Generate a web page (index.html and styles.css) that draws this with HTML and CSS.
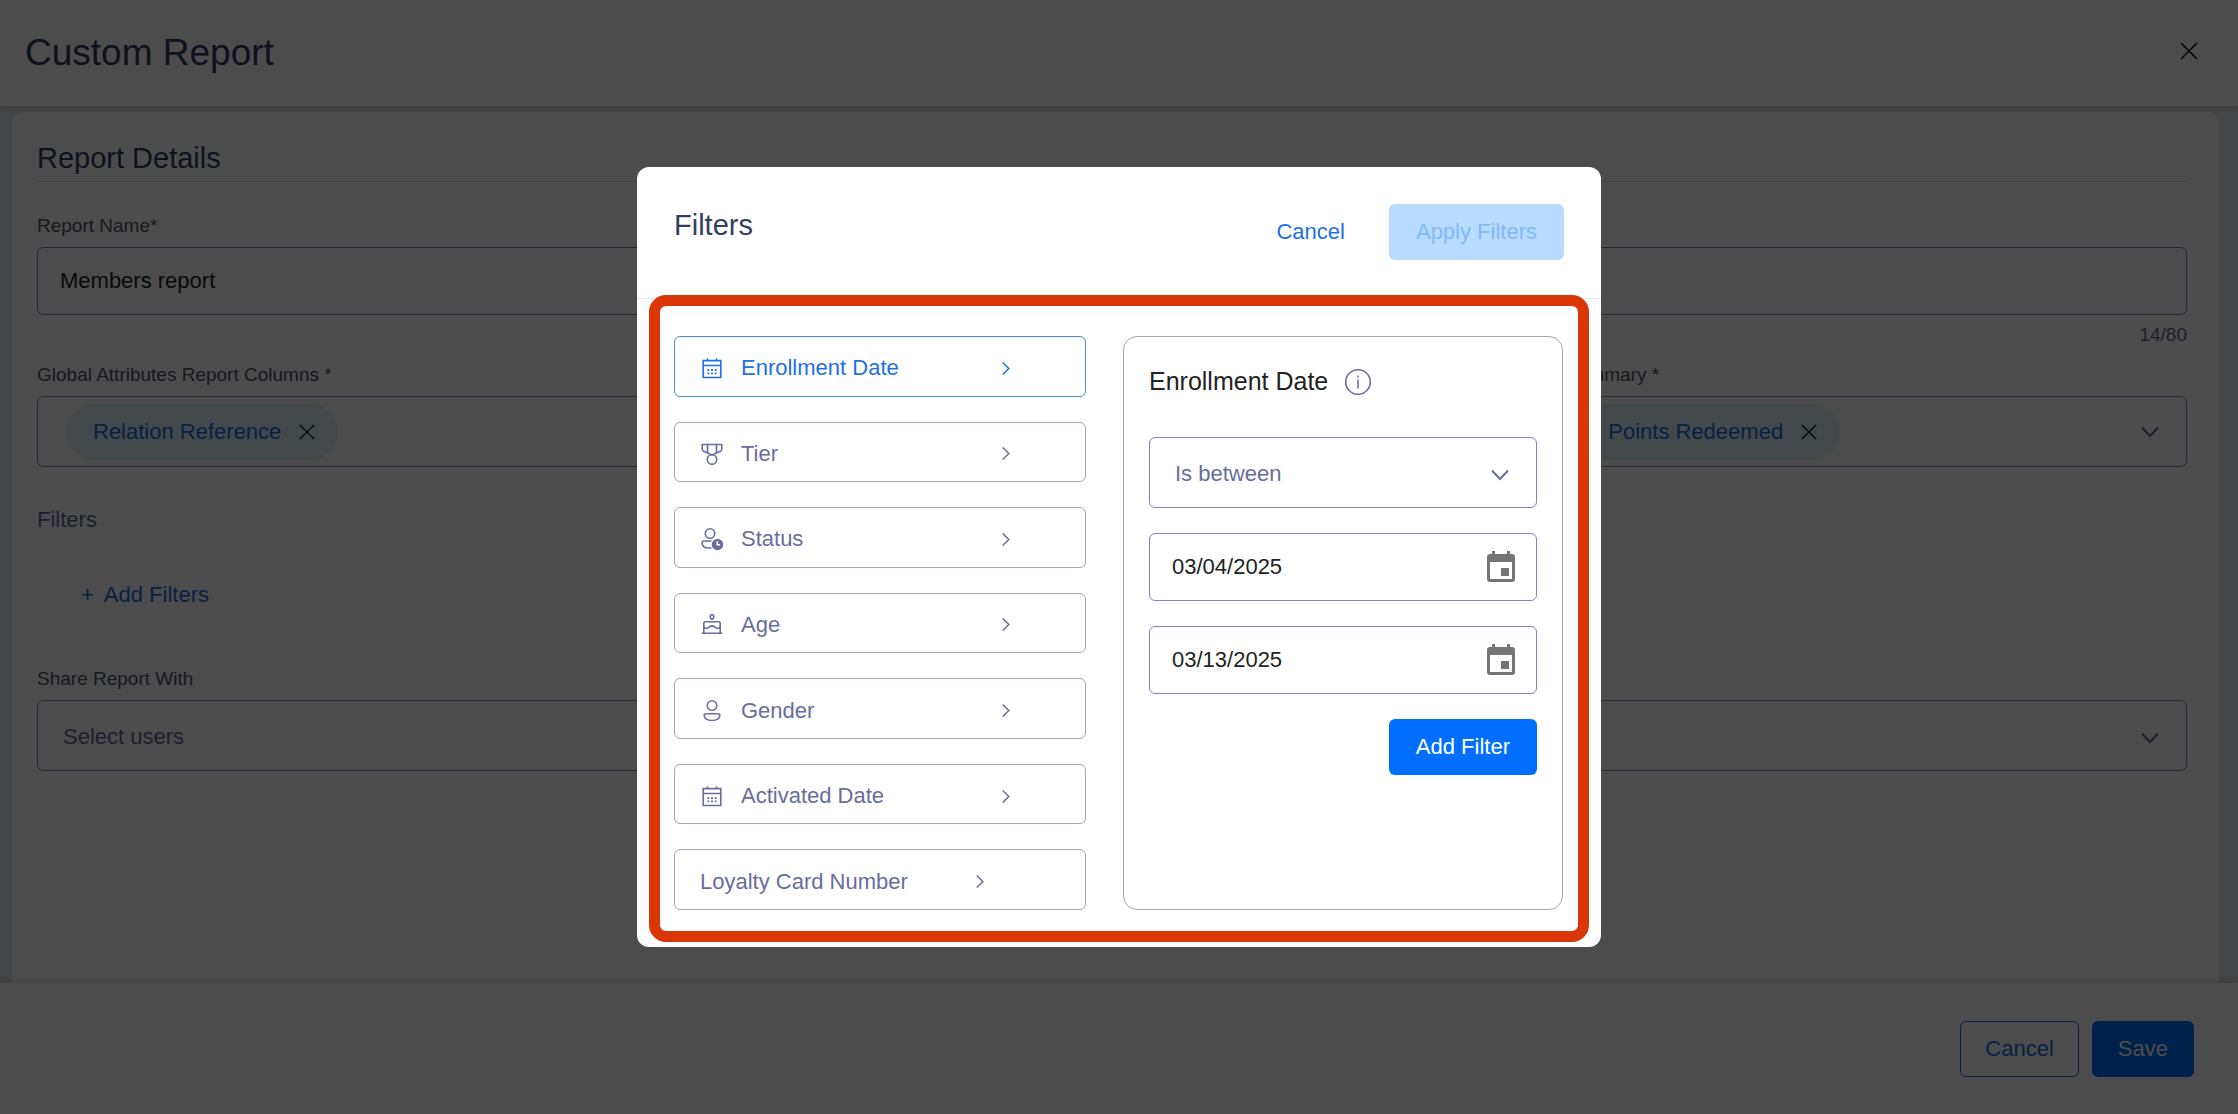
FILE: index.html
```html
<!DOCTYPE html>
<html lang="en">
<head>
  <meta charset="UTF-8">
  <meta name="viewport" content="width=device-width, initial-scale=1">
  <title>Custom Report</title>
  <link rel="stylesheet" href="styles.css">
</head>
<body>
  <!-- shared icons -->
  <svg class="sprite" aria-hidden="true">
    <symbol id="i-close" viewBox="0 0 18 18">
      <path d="M1 1L17 17M17 1L1 17"/>
    </symbol>
    <symbol id="i-down" viewBox="0 0 18 12">
      <path d="M1 1.5L9 10L17 1.5"/>
    </symbol>
    <symbol id="i-right" viewBox="0 0 10 16">
      <path d="M1.5 1.5L8 8L1.5 14.5"/>
    </symbol>
    <symbol id="i-calendar" viewBox="0 0 24 24">
      <path d="M3.2 4.600H20.800V21.500H3.200ZM3.200 9.500H20.800M7.500 2.500V5M16.500 2.500V5"/>
      <path class="dots" d="M7.400 14h1.800M11.100 14h1.800M14.800 14h1.800M7.400 17.300h1.800M11.100 17.300h1.800M14.800 17.300h1.800"/>
    </symbol>
    <symbol id="i-medal" viewBox="0 0 24 24">
      <path d="M2.200 2.500H21.800V7Q21.800 8.700 20.400 9.300L12 13L3.600 9.300Q2.200 8.700 2.200 7ZM7.500 2.500V11M16.500 2.500V11"/>
      <circle cx="12" cy="17.500" r="4.700"/>
    </symbol>
    <symbol id="i-user-clock" viewBox="0 0 24 24">
      <circle cx="10" cy="6.500" r="4.700"/>
      <path d="M11.500 14H4Q2.200 14 2.200 16Q2.200 21 9 21H11.500"/>
      <circle class="solid" cx="17.500" cy="17.500" r="5.700"/>
      <path class="hand" d="M17.300 14.500V17.800H20"/>
    </symbol>
    <symbol id="i-cake" viewBox="0 0 24 24">
      <ellipse cx="12" cy="3.800" rx="1.700" ry="2.300"/>
      <path d="M3.800 20V10.500Q3.800 8.700 5.500 8.700H18.500Q20.200 8.700 20.200 10.500V20M2 20.200H22M3.800 14Q6.500 16.500 9.200 14Q12 11.800 14.800 14Q17.500 16.500 20.200 14"/>
    </symbol>
    <symbol id="i-user" viewBox="0 0 24 24">
      <circle cx="12" cy="6.500" r="4.700"/>
      <path d="M6 14.800H18Q19.800 14.800 19.800 16.500Q19.300 21.500 12 21.500Q4.700 21.500 4.200 16.500Q4.200 14.800 6 14.800Z"/>
    </symbol>
    <symbol id="i-event" viewBox="0 0 28 32">
      <path d="M25 3H23V0H20V3H8V0H5V3H3Q0 3 0 6V28Q0 31 3 31H25Q28 31 28 28V6Q28 3 25 3ZM25 28H3V11H25ZM14 17H22V25H14Z"/>
    </symbol>
  </svg>

  <div class="page">
    <header class="page-header">
      <h1>Custom Report</h1>
      <button class="icon-btn" type="button" aria-label="Close">
        <svg class="icon icon-close"><use href="#i-close"/></svg>
      </button>
    </header>

    <main class="page-body">
      <form class="card">
        <h2>Report Details</h2>

        <div class="field">
          <label for="report_name">Report Name*</label>
          <input class="control" id="report_name" type="text" maxlength="80" value="Members report">
          <span class="counter">14/80</span>
        </div>

        <div class="columns">
          <div class="field">
            <label for="global_cols">Global Attributes Report Columns *</label>
            <div class="control multi">
              <span class="chip">Relation Reference
                <button class="icon-btn" type="button" aria-label="Remove Relation Reference"><svg class="icon icon-remove"><use href="#i-close"/></svg></button>
              </span>
              <button class="icon-btn" id="global_cols" type="button" aria-label="Open columns"><svg class="icon icon-down"><use href="#i-down"/></svg></button>
            </div>
          </div>
          <div class="field">
            <label for="summary_cols">Loyalty Summary *</label>
            <div class="control multi">
              <span class="chip">Total Points Redeemed
                <button class="icon-btn" type="button" aria-label="Remove Total Points Redeemed"><svg class="icon icon-remove"><use href="#i-close"/></svg></button>
              </span>
              <button class="icon-btn" id="summary_cols" type="button" aria-label="Open summary"><svg class="icon icon-down"><use href="#i-down"/></svg></button>
            </div>
          </div>
        </div>

        <div class="filters">
          <h3>Filters</h3>
          <button class="add-filters" type="button"><span>+</span>Add Filters</button>
        </div>

        <div class="field">
          <label for="share_with">Share Report With</label>
          <div class="select">
            <select class="control" id="share_with">
              <option>Select users</option>
            </select>
            <svg class="icon icon-down"><use href="#i-down"/></svg>
          </div>
        </div>
      </form>
    </main>

    <footer class="page-footer">
      <button class="btn btn-outline" type="button">Cancel</button>
      <button class="btn btn-primary" type="button">Save</button>
    </footer>
  </div>

  <div class="overlay">
    <section class="modal" role="dialog" aria-modal="true" aria-labelledby="modal_title">
      <header class="modal-header">
        <h2 id="modal_title">Filters</h2>
        <div class="modal-actions">
          <button class="btn btn-text" type="button">Cancel</button>
          <button class="btn btn-primary" type="button" disabled>Apply Filters</button>
        </div>
      </header>

      <div class="modal-body">
        <nav class="filter-list">
          <button class="filter-item active" type="button">
            <svg class="icon icon-type"><use href="#i-calendar"/></svg>
            <span>Enrollment Date</span>
            <svg class="icon icon-right"><use href="#i-right"/></svg>
          </button>
          <button class="filter-item" type="button">
            <svg class="icon icon-type"><use href="#i-medal"/></svg>
            <span>Tier</span>
            <svg class="icon icon-right"><use href="#i-right"/></svg>
          </button>
          <button class="filter-item" type="button">
            <svg class="icon icon-type"><use href="#i-user-clock"/></svg>
            <span>Status</span>
            <svg class="icon icon-right"><use href="#i-right"/></svg>
          </button>
          <button class="filter-item" type="button">
            <svg class="icon icon-type"><use href="#i-cake"/></svg>
            <span>Age</span>
            <svg class="icon icon-right"><use href="#i-right"/></svg>
          </button>
          <button class="filter-item" type="button">
            <svg class="icon icon-type"><use href="#i-user"/></svg>
            <span>Gender</span>
            <svg class="icon icon-right"><use href="#i-right"/></svg>
          </button>
          <button class="filter-item" type="button">
            <svg class="icon icon-type"><use href="#i-calendar"/></svg>
            <span>Activated Date</span>
            <svg class="icon icon-right"><use href="#i-right"/></svg>
          </button>
          <button class="filter-item no-icon" type="button">
            <span>Loyalty Card Number</span>
            <svg class="icon icon-right"><use href="#i-right"/></svg>
          </button>
        </nav>

        <div class="filter-panel">
          <h3>
            Enrollment Date
            <svg class="icon icon-info" viewBox="0 0 28 28">
              <circle cx="14" cy="15" r="12.300"/>
              <path d="M14 12.500V21.500M14 8.500V10.500"/>
            </svg>
          </h3>
          <div class="select">
            <select class="control" aria-label="Condition">
              <option>Is between</option>
            </select>
            <svg class="icon icon-down"><use href="#i-down"/></svg>
          </div>
          <div class="control date">
            <input type="text" aria-label="From date" value="03/04/2025">
            <button class="icon-btn" type="button" aria-label="Pick from date"><svg class="icon-event"><use href="#i-event"/></svg></button>
          </div>
          <div class="control date">
            <input type="text" aria-label="To date" value="03/13/2025">
            <button class="icon-btn" type="button" aria-label="Pick to date"><svg class="icon-event"><use href="#i-event"/></svg></button>
          </div>
          <button class="btn btn-primary" type="button">Add Filter</button>
        </div>
        <div class="highlight"></div>
      </div>
    </section>
  </div>
</body>
</html>
```

FILE: styles.css
```css
:root {
  --navy: #333e63;
  --muted: #6a6d9c;
  --border: #8085bd;
  --blue: #006fff;
  --link: #1f6fe5;
}

* {
  box-sizing: border-box;
}

body {
  margin: 0;
  font-family: "Liberation Sans", Arial, sans-serif;
  font-size: 22px;
  line-height: 26px;
  color: #222;
}

h1, h2, h3 {
  margin: 0;
  font-weight: 400;
}

button, input, select {
  font: inherit;
  color: inherit;
}

button {
  cursor: pointer;
}

.sprite {
  position: absolute;
  width: 0;
  height: 0;
}

.icon {
  flex: none;
  fill: none;
  stroke: currentColor;
  stroke-width: 1.6;
}

.icon-close {
  width: 18px;
  height: 18px;
  color: #111;
}

.icon-remove {
  width: 16px;
  height: 16px;
  color: #222;
}

.icon-down {
  width: 18px;
  height: 12px;
  color: var(--muted);
  stroke-width: 2;
}

.icon-right {
  width: 10px;
  height: 15px;
}

.icon-type {
  width: 24px;
  height: 24px;
}

.dots {
  stroke-width: 1.8;
}

.solid {
  fill: currentColor;
  stroke: none;
}

.hand {
  stroke: #fff;
}

.icon-btn {
  display: flex;
  padding: 0;
  border: 0;
  background: none;
}

/* Page */
.page {
  min-height: 100vh;
  display: flex;
  flex-direction: column;
  background: #e1e6ed;
}

.page-header {
  display: flex;
  align-items: center;
  justify-content: space-between;
  height: 106px;
  padding: 0 40px 4px 25px;
  background: #fff;
  box-shadow: 0 2px 6px rgba(0, 0, 0, .15);
}

h1 {
  padding-top: 4px;
  font-size: 37px;
  line-height: 44px;
  color: var(--navy);
}

.page-body {
  flex: 1;
  display: flex;
  padding: 6px 19px 0 12px;
}

.card {
  flex: 1;
  padding: 29px 32px 28px 25px;
  background: #fff;
  border-radius: 12px 12px 0 0;
}

.card > h2 {
  padding-bottom: 6px;
  border-bottom: 1px solid #dcdfe6;
  margin-bottom: 32px;
  font-size: 29px;
  line-height: 34px;
  color: var(--navy);
}

.field {
  display: flex;
  flex-direction: column;
}

.field label {
  margin-bottom: 9px;
  font-size: 19px;
  line-height: 24px;
  color: #55566a;
}

.control {
  width: 100%;
  height: 68px;
  padding: 0 22px;
  border: 1px solid var(--border);
  border-radius: 6px;
  background: #fff;
}

.counter {
  align-self: flex-end;
  margin-top: 8px;
  font-size: 19px;
  line-height: 24px;
  color: var(--muted);
}

.columns {
  display: grid;
  grid-template-columns: repeat(3, 1fr);
  gap: 44px;
  margin-top: 16px;
}

.columns .field:last-child {
  grid-column: 3;
}

.multi {
  display: flex;
  align-items: center;
  justify-content: space-between;
  height: 71px;
  padding: 0 27px 0 29px;
}

.chip {
  display: flex;
  align-items: center;
  gap: 18px;
  height: 56px;
  padding: 0 23px 0 26px;
  border-radius: 28px;
  background: #e0f2f8;
  color: var(--link);
}

.filters {
  margin: 40px 0 59px;
}

.filters h3 {
  font-size: 22px;
  line-height: 26px;
  color: var(--muted);
}

.add-filters {
  display: flex;
  gap: 10px;
  margin: 49px 0 0 44px;
  padding: 0;
  border: 0;
  background: none;
  color: var(--link);
}

.select {
  position: relative;
}

.select .control {
  height: 71px;
  padding: 2px 25px 0;
  appearance: none;
  color: var(--muted);
}

.select .icon-down {
  position: absolute;
  right: 28px;
  top: 32px;
  pointer-events: none;
}

.page-footer {
  display: flex;
  align-items: center;
  justify-content: flex-end;
  gap: 13px;
  height: 131px;
  padding: 0 44px;
  background: #fff;
  box-shadow: 0 -2px 6px rgba(0, 0, 0, .15);
}

.btn {
  height: 56px;
  padding: 0 25px;
  border: 1px solid transparent;
  border-radius: 6px;
  background: none;
}

.btn-primary {
  background: var(--blue);
  color: #fff;
}

.modal .btn-primary {
  padding: 0 26px;
}

.btn-primary:disabled {
  background: #b9dbff;
  color: #82b9f9;
}

.btn-outline {
  padding: 0 24px;
  border-color: var(--link);
  color: var(--link);
}

.btn-text {
  color: var(--link);
}

/* Filters dialog */
.overlay {
  position: fixed;
  inset: 0;
  display: flex;
  align-items: center;
  justify-content: center;
  background: rgba(0, 0, 0, .7);
}

.modal {
  width: 964px;
  max-width: 100%;
  border-radius: 12px;
  background: #fff;
}

.modal-header {
  display: flex;
  align-items: flex-start;
  justify-content: space-between;
  padding: 37px 37px 38px;
  border-bottom: 1px solid #e4e6ea;
}

.modal-header h2 {
  padding-top: 4px;
  font-size: 29px;
  line-height: 34px;
  color: var(--navy);
}

.modal-actions {
  display: flex;
  gap: 18px;
}

.modal-body {
  position: relative;
  display: grid;
  grid-template-columns: 412fr 440fr;
  gap: 37px;
  min-height: 648px;
  padding: 37px 38px 37px 37px;
}

.filter-list {
  display: grid;
  grid-auto-rows: 1fr;
  gap: 25px;
}

.filter-item {
  display: flex;
  align-items: center;
  padding: 4px 25px 0;
  border: 1px solid #a2a5be;
  border-radius: 6px;
  background: #fff;
  color: var(--muted);
  text-align: left;
}

.filter-item span {
  width: 260px;
  margin-left: 17px;
}

.filter-item.no-icon span {
  width: 275px;
  margin-left: 0;
}

.filter-item.active {
  border-color: #4b8bd0;
  color: var(--link);
}

.filter-panel {
  display: flex;
  flex-direction: column;
  gap: 25px;
  padding: 25px;
  border: 1px solid #a2a5be;
  border-radius: 14px;
}

.filter-panel h3 {
  display: flex;
  align-items: center;
  gap: 16px;
  margin-bottom: 12px;
  font-size: 25px;
  line-height: 38px;
}

.icon-info {
  width: 28px;
  height: 28px;
  color: var(--muted);
}

.date {
  display: flex;
  align-items: center;
  padding: 0 21px 0 22px;
}

.date input {
  flex: 1;
  min-width: 0;
  padding: 0;
  border: 0;
  outline: 0;
}

.icon-event {
  width: 28px;
  height: 32px;
  fill: #757575;
  fill-rule: evenodd;
}

.filter-panel .btn {
  align-self: flex-end;
}

/* callout frame round the dialog body */
.highlight {
  position: absolute;
  inset: -4px 12px 5px;
  border: 11px solid #da3608;
  border-radius: 17px;
  pointer-events: none;
}
```
